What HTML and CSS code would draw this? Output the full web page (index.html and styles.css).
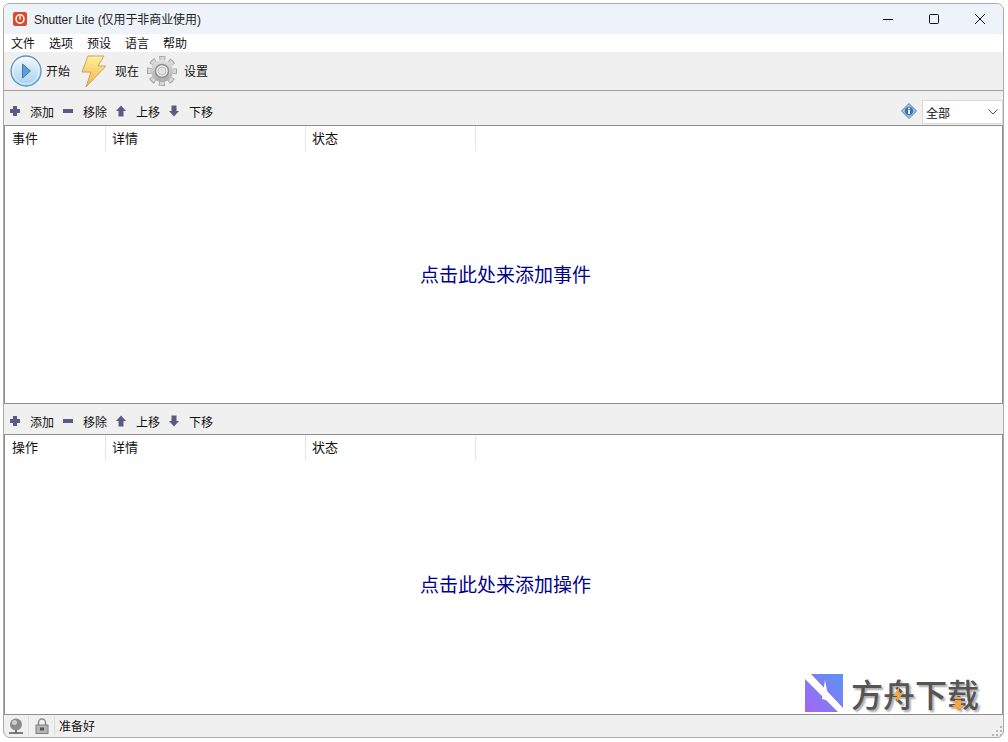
FILE: index.html
```html
<!DOCTYPE html>
<html lang="zh">
<head>
<meta charset="utf-8">
<title>Shutter Lite</title>
<link rel="stylesheet" href="styles.css">
</head>
<body>
<div class="window">
  <header class="titlebar">
    <svg class="appicon" width="14" height="14" viewBox="0 0 14 14"><rect width="14" height="14" rx="2" fill="#dc4a2c"/><ellipse cx="7" cy="7" rx="4" ry="4.200" fill="none" stroke="#fff" stroke-width="1.500"/><rect x="6.300" y="4" width="1.400" height="3.500" fill="#fff"/></svg>
    <span class="title">Shutter Lite (仅用于非商业使用)</span>
    <div class="caption">
      <span class="capbtn"><svg width="12" height="12" viewBox="0 0 12 12"><path d="M1 6.500h10" stroke="#111" fill="none"/></svg></span>
      <span class="capbtn"><svg width="12" height="12" viewBox="0 0 12 12"><rect x="1.500" y="1.500" width="9" height="9" rx="1" stroke="#111" fill="none"/></svg></span>
      <span class="capbtn"><svg width="12" height="12" viewBox="0 0 12 12"><path d="M1 1l10 10M11 1L1 11" stroke="#111" fill="none"/></svg></span>
    </div>
  </header>
  <nav class="menubar"><span>文件</span><span>选项</span><span>预设</span><span>语言</span><span>帮助</span></nav>
  <div class="maintools">
    <div class="tool play">
      <svg width="32" height="32" viewBox="0 0 32 32"><defs><linearGradient id="pg" x1="0" y1="0" x2="0" y2="1"><stop offset="0" stop-color="#f4f9fd"/><stop offset="1" stop-color="#a3cfef"/></linearGradient></defs><circle cx="16" cy="16" r="15" fill="url(#pg)" stroke="#5a96c6" stroke-width="1.300"/><circle cx="16" cy="16" r="13" fill="none" stroke="#fff" stroke-opacity=".6"/><path d="M12.500 9l8 7-8 7z" fill="#5c9fd6" stroke="#3d78ac"/></svg>
      <span>开始</span>
    </div>
    <div class="tool bolt">
      <svg width="26" height="33" viewBox="0 0 26 33"><defs><linearGradient id="bg" x1="0" y1="0" x2="0" y2="1"><stop offset="0" stop-color="#fff0a0"/><stop offset="1" stop-color="#f2b53c"/></linearGradient></defs><path d="M7 1h16l-6 10h8L5 32l5-15H1z" fill="url(#bg)" stroke="#cfa35c"/></svg>
      <span>现在</span>
    </div>
    <div class="tool gear">
      <svg width="30" height="30" viewBox="0 0 30 30"><defs><linearGradient id="gg" x1="0" y1="0" x2="0" y2="1"><stop offset="0" stop-color="#e2e2e2"/><stop offset="1" stop-color="#a9a9a9"/></linearGradient></defs><circle cx="15" cy="15" r="12" fill="none" stroke="#9a9a9a" stroke-width="6" stroke-dasharray="5.600 3.820" stroke-dashoffset="2.800"/><circle cx="15" cy="15" r="12" fill="none" stroke="#d6d6d6" stroke-width="4.400" stroke-dasharray="4.400 5.020" stroke-dashoffset="2.200"/><circle cx="15" cy="15" r="11" fill="url(#gg)"/><circle cx="15" cy="15" r="6.500" fill="#f4f4f4" stroke="#8f8f8f" stroke-width="1.500"/><circle cx="15" cy="15" r="4" fill="#e2e2e2" stroke="#bdbdbd"/></svg>
      <span>设置</span>
    </div>
  </div>
  <div class="subtools first">
    <span class="st"><svg class="i" width="12" height="12" viewBox="0 0 12 12"><path d="M4 1h4v3h3v4H8v3H4V8H1V4h3z" fill="#5a5a85"/></svg>添加</span>
    <span class="st"><svg class="i" width="12" height="12" viewBox="0 0 12 12"><path d="M1 4h10v4H1z" fill="#5a5a85"/></svg>移除</span>
    <span class="st"><svg class="i" width="12" height="12" viewBox="0 0 12 12"><path d="M6 .5l5 5.500H8.500v5.500h-5V6H1z" fill="#5a5a85"/></svg>上移</span>
    <span class="st"><svg class="i" width="12" height="12" viewBox="0 0 12 12"><path d="M6 11.500L11 6H8.500V.5h-5V6H1z" fill="#5a5a85"/></svg>下移</span>
    <svg class="info" width="16" height="16" viewBox="0 0 16 16"><path d="M8 .5L15.500 8 8 15.500.5 8z" fill="#9cc0e2" stroke="#4f86bd"/><circle cx="8" cy="8" r="4.200" fill="#3a72ad"/><path d="M7.100 4.800h1.800v1.400H7.100zM7.100 7h1.800v4H7.100z" fill="#fff"/></svg>
    <div class="select"><span>全部</span><svg width="10" height="6" viewBox="0 0 10 6"><path d="M.5.500L5 5 9.500.500" fill="none" stroke="#555"/></svg></div>
  </div>
  <section class="list top">
    <div class="head"><span class="c1">事件</span><span class="c2">详情</span><span class="c3">状态</span></div>
    <div class="hint">点击此处来添加事件</div>
  </section>
  <div class="subtools second">
    <span class="st"><svg class="i" width="12" height="12" viewBox="0 0 12 12"><path d="M4 1h4v3h3v4H8v3H4V8H1V4h3z" fill="#5a5a85"/></svg>添加</span>
    <span class="st"><svg class="i" width="12" height="12" viewBox="0 0 12 12"><path d="M1 4h10v4H1z" fill="#5a5a85"/></svg>移除</span>
    <span class="st"><svg class="i" width="12" height="12" viewBox="0 0 12 12"><path d="M6 .5l5 5.500H8.500v5.500h-5V6H1z" fill="#5a5a85"/></svg>上移</span>
    <span class="st"><svg class="i" width="12" height="12" viewBox="0 0 12 12"><path d="M6 11.500L11 6H8.500V.5h-5V6H1z" fill="#5a5a85"/></svg>下移</span>
  </div>
  <section class="list bottom">
    <div class="head"><span class="c1">操作</span><span class="c2">详情</span><span class="c3">状态</span></div>
    <div class="hint">点击此处来添加操作</div>
    <div class="mark">
      <svg width="38" height="38" viewBox="0 0 38 38"><defs><linearGradient id="lg" x1="1" y1="0" x2="0" y2="1"><stop offset="0" stop-color="#5b95f5"/><stop offset="1" stop-color="#a565ee"/></linearGradient></defs><rect width="38" height="38" fill="url(#lg)"/><path d="M0 0h6l32 34v4h-5L0 5z" fill="#fff"/><path d="M20 6l-3 19 7 2z" fill="#fff"/></svg>
      <span class="marktext">方舟下载</span>
      <svg class="bolt-accent" width="10" height="16" viewBox="0 0 10 16"><path d="M6 0L0 9h4l-1 7 7-10H6z" fill="#f3a445"/></svg>
      <svg class="arrow-accent" width="12" height="14" viewBox="0 0 12 14"><path d="M3 0h6v2H3zM3 3h6v5h3l-6 6-6-6h3z" fill="#f3a445"/></svg>
    </div>
  </section>
  <footer class="statusbar">
    <span class="cell"><svg width="16" height="16" viewBox="0 0 16 16"><circle cx="8" cy="6.500" r="6" fill="#8b8b8b"/><circle cx="6.500" cy="4.500" r="2.500" fill="#cfcfcf"/><path d="M1 15h14M8 12v3" stroke="#555" stroke-width="1.500"/></svg></span>
    <span class="cell"><svg width="14" height="16" viewBox="0 0 14 16"><path d="M3.500 7V4.500a3.500 3.500 0 017 0V7" fill="none" stroke="#8d8d8d" stroke-width="1.500"/><rect x="1" y="7" width="12" height="8.500" fill="#b5b5b5" stroke="#7f7f7f"/><rect x="5" y="9.500" width="4" height="3" fill="#555"/></svg></span>
    <span class="stat">准备好</span>
    <svg class="grip" width="10" height="10" viewBox="0 0 10 10"><path d="M8 0h2v2H8zM4 4h2v2H4zM8 4h2v2H8zM0 8h2v2H0zM4 8h2v2H4zM8 8h2v2H8z" fill="#b5b5b5"/></svg>
  </footer>
</div>
</body>
</html>
```
FILE: styles.css
```css
html, body { margin: 0; padding: 0; background: #fff; }
body { padding: 3px 3px 0 3px; height: 739px; overflow: hidden; font-family: "Noto Sans CJK SC", "Liberation Sans", sans-serif; color: #111; font-size: 12px; }
.window { box-sizing: border-box; width: 1001px; height: 735px; border: 1px solid #a9a9a9; border-radius: 7px; overflow: hidden; display: flex; flex-direction: column; background: #f0f0f0; }
.titlebar { height: 30px; flex: none; background: #eef3f9; display: flex; align-items: center; padding-left: 9px; }
.appicon { margin-right: 7px; }
.title { font-family: "Liberation Sans", "Noto Sans CJK SC", sans-serif; font-size: 12px; color: #222; letter-spacing: -0.08px; margin-top: -1px; }
.caption { margin-left: auto; display: flex; }
.capbtn { width: 46px; height: 30px; display: flex; align-items: center; justify-content: center; }
.menubar { height: 18px; flex: none; background: #fff; display: flex; gap: 14px; padding-left: 7px; align-items: center; line-height: 18px; }
.maintools { height: 38px; flex: none; border-bottom: 1px solid #a0a0a0; display: flex; align-items: center; padding-left: 6px; }
.tool { display: flex; align-items: center; }
.tool span { margin-top: -1px; }
.play { gap: 4px; margin-right: 11px; }
.bolt { gap: 8px; margin-right: 8px; }
.gear { gap: 7px; }
.subtools { flex: none; display: flex; align-items: center; padding-left: 5px; }
.subtools.first { height: 34px; padding-top: 6px; box-sizing: border-box; }
.subtools.second { height: 30px; padding-top: 4px; box-sizing: border-box; }
.st { display: flex; align-items: center; margin-right: 8px; }
.i { margin-right: 9px; }
.info { margin-left: auto; margin-right: 5px; }
.select { box-sizing: border-box; width: 81px; height: 24px; background: #fff; border: 1px solid #d9d9d9; display: flex; align-items: center; justify-content: space-between; padding: 0 4px 0 3px; margin-top: 2px; }
.list { position: relative; background: #fff; border: 1px solid #8e8e8e; display: flex; flex-direction: column; flex: none; box-sizing: border-box; margin: 0; }
.list.top { height: 279px; }
.list.bottom { height: 281px; }
.head { display: flex; height: 26px; flex: none; align-items: flex-start; font-size: 13px; }
.head span { box-sizing: border-box; height: 25px; padding-left: 7px; border-right: 1px solid #e5e5e5; line-height: 24px; }
.head .c1 { width: 101px; }
.head .c2 { width: 200px; padding-left: 6px; }
.head .c3 { width: 170px; padding-left: 6px; }
.hint { flex: 1; display: flex; align-items: center; justify-content: center; color: #00008b; font-size: 19px; padding-bottom: 8px; padding-left: 4px; }
.mark { position: absolute; right: 23px; bottom: 2px; display: flex; align-items: center; gap: 8px; }
.marktext { font-size: 32px; font-weight: 500; color: #555; text-shadow: 2px 2px 2px #aaa; line-height: 38px; }
.bolt-accent { position: absolute; left: 88px; top: 13px; }
.arrow-accent { position: absolute; left: 147px; top: 23px; }
.statusbar { flex: 1; display: flex; align-items: center; }
.cell { display: flex; align-items: center; justify-content: center; width: 24px; height: 20px; border-right: 1px solid #ddd; margin-right: 1px; }
.stat { padding-left: 3px; font-size: 12px; margin-top: -1px; }
.grip { margin-left: auto; margin-right: 1px; align-self: flex-end; margin-bottom: 1px; }
```
